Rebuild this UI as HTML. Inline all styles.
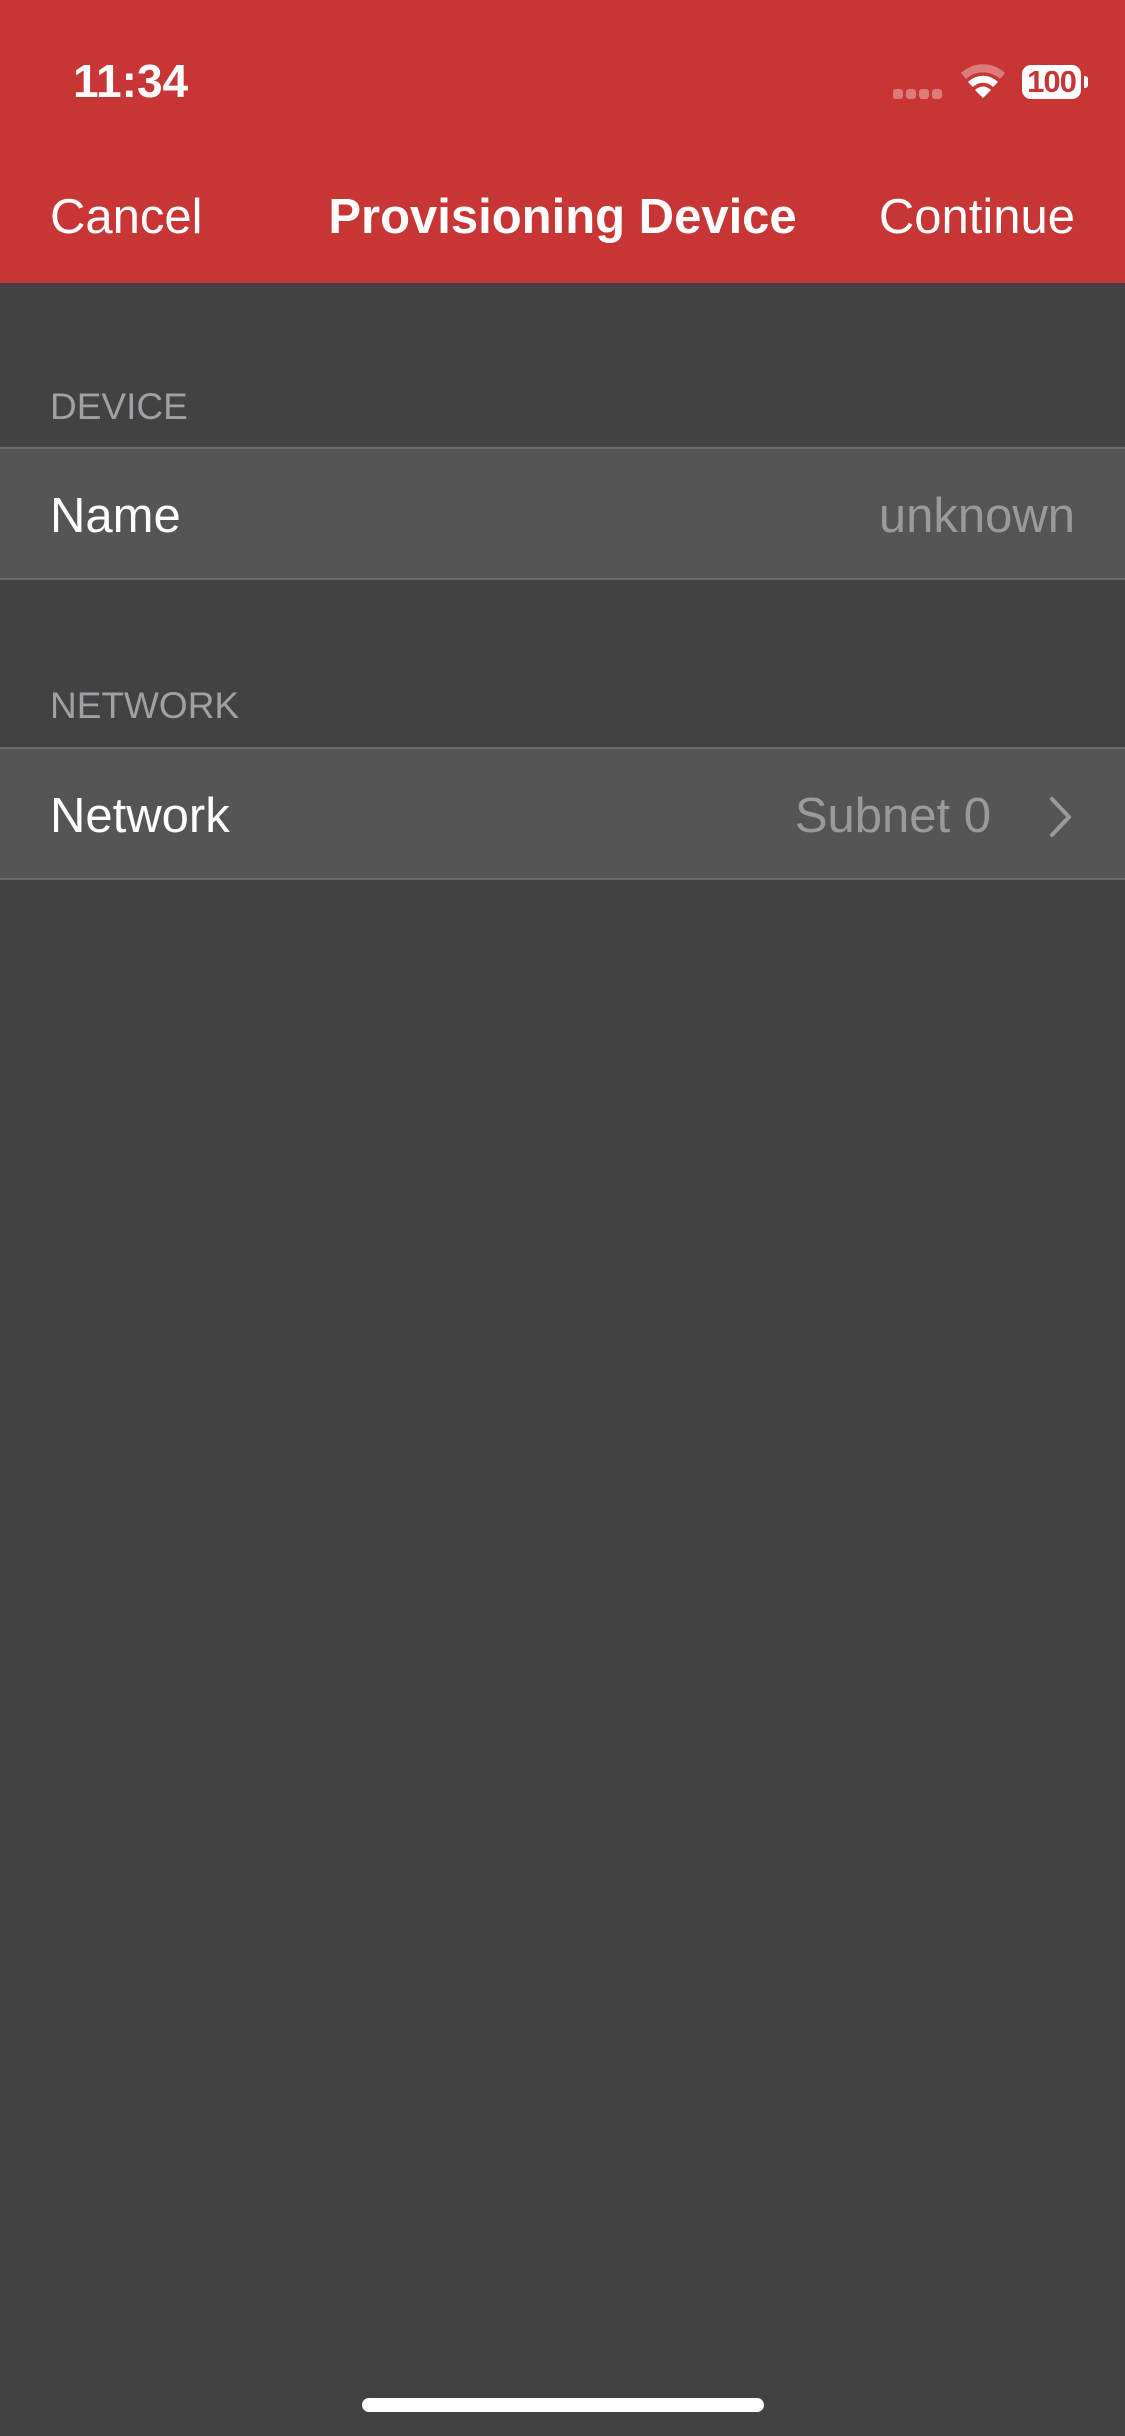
<!DOCTYPE html>
<html><head><meta charset="utf-8"><style>
*{margin:0;padding:0;box-sizing:border-box}
body{width:1125px;height:2436px;background:#424242;font-family:"Liberation Sans",sans-serif;position:relative;overflow:hidden}
.hdr{position:absolute;left:0;top:0;width:1125px;height:283px;background:#c83535;color:#fff}
.abs{position:absolute;white-space:nowrap}
.row{position:absolute;left:0;width:1125px;background:#555;border-top:2px solid #6a6a6a;border-bottom:2px solid #6a6a6a}
.lbl{font-size:49px;color:#fff;line-height:1}
.val{font-size:49px;color:#9a9a9a;line-height:1}
.sec{font-size:37px;color:#a0a0a5;line-height:1}
</style></head><body>
<div class="hdr">
 <div class="abs" style="left:73px;top:58px;font-size:46px;font-weight:bold;line-height:1">11:34</div>
 <div class="abs" style="left:893px;top:86px">
  <span style="display:inline-block;width:10px;height:10px;border-radius:3px;background:rgba(255,255,255,.35);margin-right:3px"></span><span style="display:inline-block;width:10px;height:10px;border-radius:3px;background:rgba(255,255,255,.35);margin-right:3px"></span><span style="display:inline-block;width:10px;height:10px;border-radius:3px;background:rgba(255,255,255,.35);margin-right:3px"></span><span style="display:inline-block;width:10px;height:10px;border-radius:3px;background:rgba(255,255,255,.35)"></span>
 </div>
 <svg class="abs" style="left:960px;top:63px" width="46" height="36" viewBox="0 0 46 36">
  <path d="M1 10 A32 32 0 0 1 45 10 L40 16 A25 25 0 0 0 6 16 Z" fill="rgba(255,255,255,.35)"/>
  <path d="M8 19 A21 21 0 0 1 38 19 L33 24 A14 14 0 0 0 13 24 Z" fill="#fff"/>
  <path d="M15 27 A11 11 0 0 1 31 27 L23 35 Z" fill="#fff"/>
 </svg>
 <div class="abs" style="left:1022px;top:65px;width:59px;height:34px;background:#fff;border-radius:9px;color:#c83535;font-weight:bold;font-size:31px;line-height:34px;text-align:center;letter-spacing:-1px">100</div>
 <div class="abs" style="left:1084px;top:76px;width:4px;height:12px;background:#fff;border-radius:0 3px 3px 0"></div>
 <div class="abs" style="left:50px;top:193px;font-size:49px;line-height:1">Cancel</div>
 <div class="abs" style="left:0;width:1125px;text-align:center;top:193px;font-size:49px;font-weight:bold;line-height:1">Provisioning Device</div>
 <div class="abs" style="right:50px;top:193px;font-size:49px;line-height:1">Continue</div>
</div>
<div class="abs sec" style="left:50px;top:388px">DEVICE</div>
<div class="row" style="top:447px;height:133px">
 <div class="abs lbl" style="left:50px;top:43px">Name</div>
 <div class="abs val" style="right:50px;top:43px">unknown</div>
</div>
<div class="abs sec" style="left:50px;top:687px">NETWORK</div>
<div class="row" style="top:747px;height:133px">
 <div class="abs lbl" style="left:50px;top:43px">Network</div>
 <div class="abs val" style="right:134px;top:43px">Subnet 0</div>
 <svg class="abs" style="left:1046px;top:47px" width="28" height="42" viewBox="0 0 28 42"><path d="M6 3 L23 21 L6 39" stroke="#9a9a9a" stroke-width="4" fill="none" stroke-linecap="round" stroke-linejoin="round"/></svg>
</div>
<div class="abs" style="left:362px;top:2398px;width:402px;height:14px;border-radius:7px;background:#fff"></div>
</body></html>
